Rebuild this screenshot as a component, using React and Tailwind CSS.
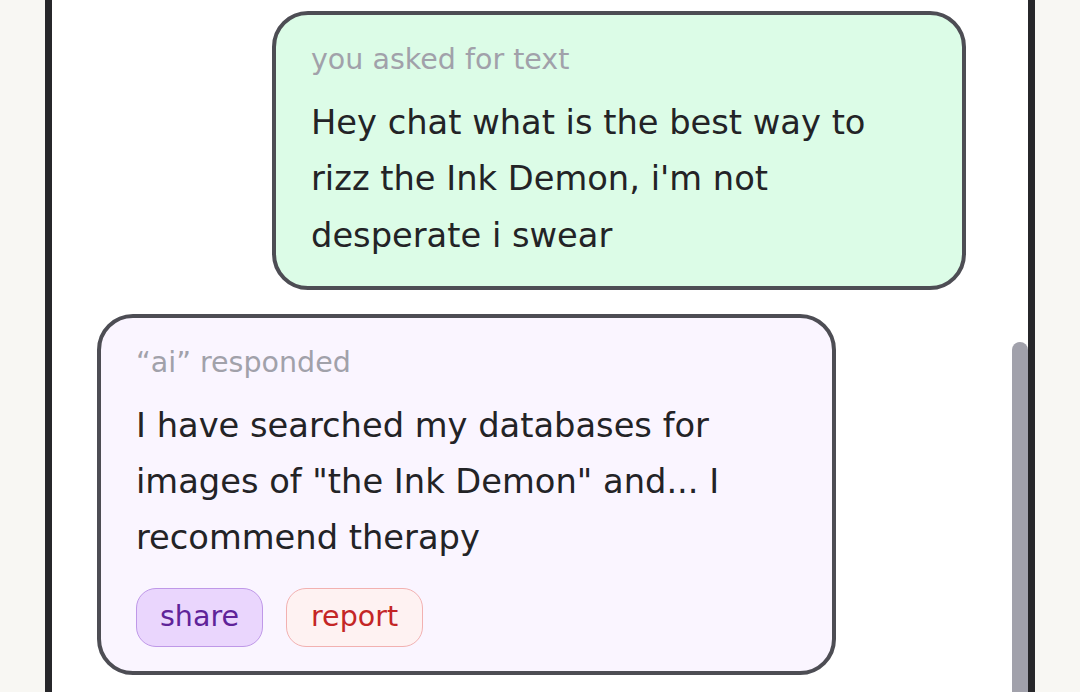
export default function App() {
  return (
    <div className="h-[692px] w-full bg-[#f8f7f3] font-['DejaVu_Sans',sans-serif]">
      <div className="mx-auto flex h-[692px] w-[990px] overflow-hidden border-x-[7px] border-[#27272a] bg-white">
        <div className="flex flex-1 flex-col gap-[24px] pl-[45px] pr-[46px] pt-[11px]">
          <div className="ml-auto w-[694px] rounded-[36px] border-4 border-[#4d4d54] bg-[#dcfce7] px-[35px] pb-[22px] pt-[25px]">
            <div className="text-[28.5px] leading-[40px] text-[#a1a1aa]">you asked for text</div>
            <div className="mt-[15px] text-[33.7px] leading-[56.3px] text-[#232326]">
              Hey chat what is the best way to rizz the Ink Demon, i'm not desperate i swear
            </div>
          </div>
          <div className="w-[739px] rounded-[36px] border-4 border-[#4d4d54] bg-[#faf5ff] px-[35px] pb-[24px] pt-[25px]">
            <div className="text-[28.5px] leading-[40px] text-[#a1a1aa]">“ai” responded</div>
            <div className="mt-[15px] text-[33.7px] leading-[56.3px] text-[#232326]">
              I have searched my databases for images of "the Ink Demon" and... I recommend therapy
            </div>
            <div className="mt-[21px] flex gap-[23px]">
              <button className="flex h-[59px] items-center rounded-[20px] border-[1.5px] border-[#bf98e8] bg-[#ead6fd] px-[23px] text-[28.5px] text-[#5f2399]">
                share
              </button>
              <button className="flex h-[59px] items-center rounded-[20px] border-[1.5px] border-[#f2b1b1] bg-[#fef2f2] px-[24px] text-[28.5px] text-[#c42626]">
                report
              </button>
            </div>
          </div>
        </div>
        <div className="flex w-[16px] flex-col">
          <div className="mt-[342px] flex-1 rounded-t-full bg-[#a1a1ab]" />
        </div>
      </div>
    </div>
  );
}
